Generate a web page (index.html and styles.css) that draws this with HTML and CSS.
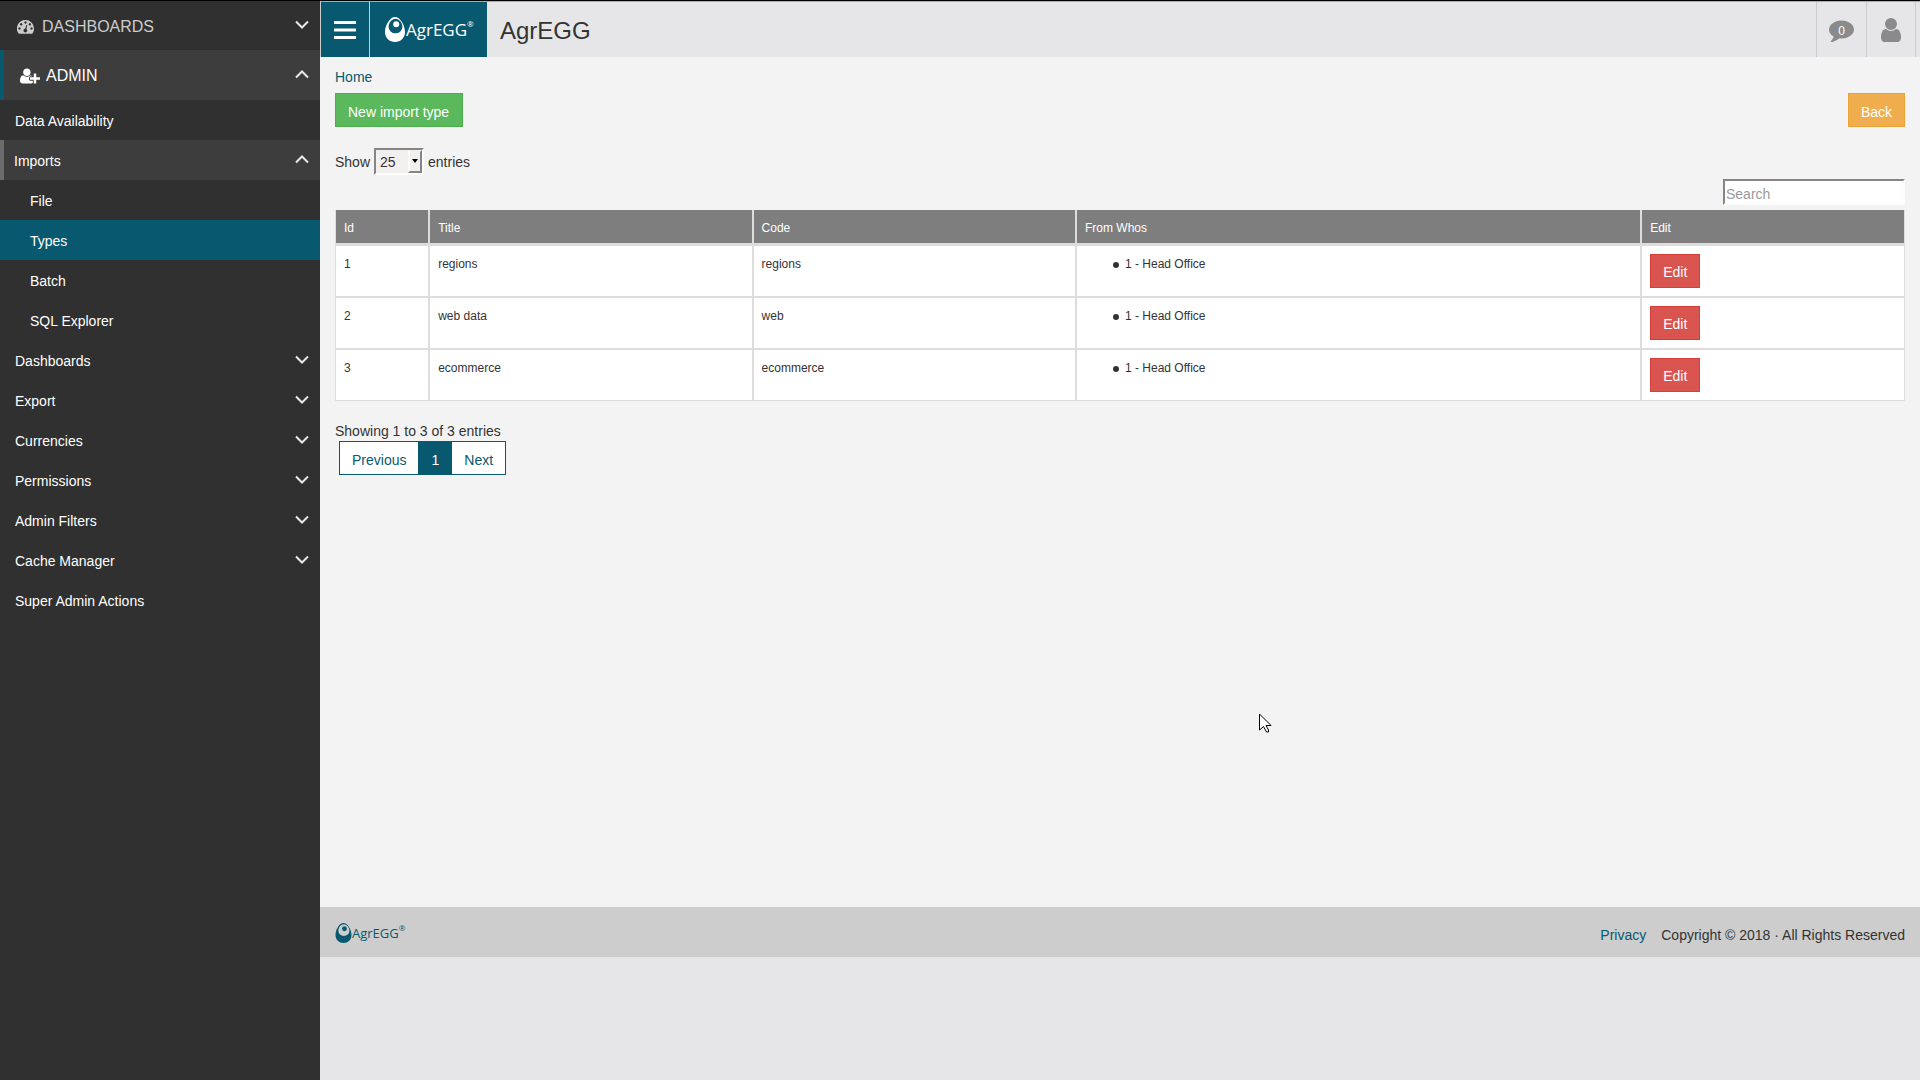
FILE: index.html
```html
<!DOCTYPE html>
<html lang="en">
<head>
<meta charset="utf-8">
<title>AgrEGG</title>
<link rel="stylesheet" href="styles.css">
</head>
<body>
<svg class="defs" aria-hidden="true">
  <symbol id="down" viewBox="0 0 14 9"><path d="M1 1.500 7 7.500 13 1.500" fill="none" stroke="currentColor" stroke-width="2"/></symbol>
  <symbol id="up" viewBox="0 0 14 9"><path d="M1 7.500 7 1.500 13 7.500" fill="none" stroke="currentColor" stroke-width="2"/></symbol>
  <symbol id="egg" viewBox="0 0 20 25"><path fill="currentColor" fill-rule="evenodd" d="M10 0C15 0 20 8 20 15 20 21 15.500 25 10 25S0 21 0 15C0 8 5 0 10 0ZM10.500 1.700C7 1.700 3.600 5.500 3.600 10A6.900 6.300 0 0 0 17.400 10C17.400 5.500 14 1.700 10.500 1.700Z"/><circle cx="11.200" cy="7.200" r="3" fill="currentColor"/></symbol>
</svg>
<nav class="sidebar">
  <a class="section" href="#"><svg class="gauge" viewBox="0 0 17 14"><path fill="currentColor" fill-rule="evenodd" d="M8.500 0A8.500 8.500 0 0 1 17 8.500C17 10.400 16.500 12 15.600 13.300Q15.300 13.700 14.800 13.700H2.200Q1.700 13.700 1.400 13.300A8.500 8.500 0 0 1 8.500 0ZM8.500 1.300a1.200 1.200 0 1 0 .01 0ZM4.200 3.100a1.200 1.200 0 1 0 .01 0ZM12.800 3.100a1.200 1.200 0 1 0 .01 0ZM2.500 7.300a1.200 1.200 0 1 0 .01 0ZM14.500 7.300a1.200 1.200 0 1 0 .01 0ZM9.300 5 8.300 8.600A1.900 1.900 0 1 0 9.400 8.900L10.300 5.300Z"/></svg><span>DASHBOARDS</span><svg class="chevron"><use href="#down"/></svg></a>
  <a class="section open" href="#"><svg class="admin" viewBox="0 0 2048 1792"><path fill="currentColor" d="M704 896q-159 0-271.500-112.500t-112.500-271.500 112.500-271.500 271.500-112.500 271.500 112.500 112.500 271.500-112.500 271.500-271.500 112.500zm960 128h352q13 0 22.500 9.500t9.500 22.500v192q0 13-9.500 22.500t-22.500 9.500h-352v352q0 13-9.500 22.500t-22.500 9.500h-192q-13 0-22.500-9.500t-9.500-22.500v-352h-352q-13 0-22.500-9.500t-9.500-22.500v-192q0-13 9.500-22.500t22.500-9.500h352v-352q0-13 9.500-22.500t22.500-9.500h192q13 0 22.500 9.500t9.500 22.500v352zm-736 224q0 52 38 90t90 38h256v238q-68 50-171 50h-874q-121 0-194-69t-73-190q0-53 3.500-103.500t14-109 26.500-108.500 43-97.500 62-81 85.500-53.500 111.500-20q19 0 39 17 79 61 154.500 91.500t164.500 30.500 164.500-30.500 154.500-91.500q20-17 39-17 132 0 217 96h-223q-52 0-90 38t-38 90v192z"/></svg><span>ADMIN</span><svg class="chevron"><use href="#up"/></svg></a>
  <a class="item" href="#">Data Availability</a>
  <a class="item open" href="#">Imports<svg class="chevron"><use href="#up"/></svg></a>
  <a class="item sub" href="#">File</a>
  <a class="item sub active" href="#">Types</a>
  <a class="item sub" href="#">Batch</a>
  <a class="item sub" href="#">SQL Explorer</a>
  <a class="item" href="#">Dashboards<svg class="chevron"><use href="#down"/></svg></a>
  <a class="item" href="#">Export<svg class="chevron"><use href="#down"/></svg></a>
  <a class="item" href="#">Currencies<svg class="chevron"><use href="#down"/></svg></a>
  <a class="item" href="#">Permissions<svg class="chevron"><use href="#down"/></svg></a>
  <a class="item" href="#">Admin Filters<svg class="chevron"><use href="#down"/></svg></a>
  <a class="item" href="#">Cache Manager<svg class="chevron"><use href="#down"/></svg></a>
  <a class="item" href="#">Super Admin Actions</a>
</nav>
<div class="page">
  <header class="topbar">
    <button class="toggle" type="button" aria-label="Toggle menu"><svg viewBox="0 0 22 18"><path fill="currentColor" d="M0 0h22v3H0zM0 7.500h22v3H0zM0 15h22v3H0z"/></svg></button>
    <a class="logo" href="#"><svg class="egg"><use href="#egg"/></svg><span>AgrEGG</span><sup>®</sup></a>
    <h1>AgrEGG</h1>
    <a class="action" href="#" aria-label="Messages"><svg class="comment" viewBox="0 0 1792 1792"><path fill="currentColor" d="M1792 896q0 174-120 321.500t-326 233-450 85.500q-70 0-145-8-198 175-460 242-49 14-114 22-17 2-30.500-9t-17.500-29v-1q-3-4-.5-12t2-10 4.500-9.500l6-9 7-8.500 8-9q7-8 31-34.500t34.500-38 31-39.500 32.500-51 27-59 26-76q-157-89-247.500-220t-90.500-281q0-174 120-321.500t326-233 450-85.500 450 85.500 326 233 120 321.500z"/></svg><span class="count">0</span></a>
    <a class="action last" href="#" aria-label="Account"><svg class="user" viewBox="0 0 1792 1792"><path fill="currentColor" d="M1536 1399q0 109-62.500 187t-150.500 78h-854q-88 0-150.500-78t-62.500-187q0-85 8.500-160.500t31.500-152 58.500-131 94-89 134.500-34.500q131 128 313 128t313-128q76 0 134.500 34.500t94 89 58.500 131 31.500 152 8.500 160.500zm-256-887q0 159-112.500 271.500t-271.500 112.500-271.500-112.500-112.500-271.500 112.500-271.500 271.500-112.500 271.500 112.500 112.500 271.500z"/></svg></a>
  </header>
  <main class="content">
    <div class="crumbs"><a href="#">Home</a></div>
    <div class="toolbar">
      <button class="btn success" type="button">New import type</button>
      <button class="btn warning" type="button">Back</button>
    </div>
    <div class="length">
      <label for="length">Show</label>
      <span class="picker"><select id="length"><option>10</option><option selected>25</option><option>50</option></select><span class="arrow"><svg viewBox="0 0 6 4"><path d="M0 0h6L3 4z"/></svg></span></span>
      <span class="unit">entries</span>
    </div>
    <div class="search"><input type="search" placeholder="Search" aria-label="Search"></div>
    <table>
      <colgroup><col class="col-id"><col class="col-name"><col class="col-name"><col class="col-whos"><col class="col-edit"></colgroup>
      <thead><tr><th>Id</th><th>Title</th><th>Code</th><th>From Whos</th><th>Edit</th></tr></thead>
      <tbody>
        <tr><td>1</td><td>regions</td><td>regions</td><td><ul><li>1 - Head Office</li></ul></td><td class="tools"><button class="btn danger" type="button">Edit</button></td></tr>
        <tr><td>2</td><td>web data</td><td>web</td><td><ul><li>1 - Head Office</li></ul></td><td class="tools"><button class="btn danger" type="button">Edit</button></td></tr>
        <tr><td>3</td><td>ecommerce</td><td>ecommerce</td><td><ul><li>1 - Head Office</li></ul></td><td class="tools"><button class="btn danger" type="button">Edit</button></td></tr>
      </tbody>
    </table>
    <div class="info">Showing 1 to 3 of 3 entries</div>
    <div class="pager"><a href="#">Previous</a><a class="current" href="#">1</a><a href="#">Next</a></div>
  </main>
  <footer class="footer">
    <a class="logo small" href="#"><svg class="egg"><use href="#egg"/></svg><span>AgrEGG</span><sup>®</sup></a>
    <a class="privacy" href="#">Privacy</a>
    <span>Copyright © 2018 · All Rights Reserved</span>
  </footer>
</div>
<svg class="cursor" viewBox="0 0 13 20" aria-hidden="true"><path d="M.5 1V17L4.500 13.500 7.500 19H9.500V17L7 12.500H12Z" fill="#fff" stroke="#000"/></svg>
</body>
</html>
```
FILE: styles.css
```css
* { box-sizing: border-box; }
body {
  margin: 0;
  min-height: 100vh;
  display: flex;
  border-top: 1px solid #000;
  background: #e6e6e8;
  color: #333;
  font: 14px/20px "Liberation Sans", Arial, sans-serif;
}
a { color: #08596f; text-decoration: none; }
.defs { position: absolute; width: 0; height: 0; }

.sidebar { flex: 0 0 320px; background: #303030; }
.section, .item {
  display: flex;
  align-items: center;
  padding: 2px 11px 0 15px;
  color: #fff;
}
.section { height: 50px; padding-left: 17px; gap: 8px; font-size: 16px; color: #ccc; }
.section:first-child { height: 49px; }
.item { height: 40px; }
.section.open, .item.open { background: #3d3d3d; color: #fff; }
.section.open { border-left: 4px solid #08596f; padding-left: 16px; gap: 6px; }
.item.open { border-left: 4px solid #6b6b6b; padding-left: 10px; }
.item.sub { padding-left: 30px; }
.item.active { background: #08596f; }
.chevron { width: 14px; height: 9px; margin: 0 0 4px auto; color: #e8e8e8; }
.gauge { width: 17px; height: 14px; }
.admin { width: 20px; height: 18px; }

.page { flex: 1; min-width: 0; }
.topbar {
  display: flex;
  height: 56px;
  border-top: 1px solid #aaa;
  border-left: 1px solid #ccc;
  padding-right: 4px;
}
.toggle {
  width: 49px;
  padding: 0;
  border: 0;
  border-right: 1px solid #ccc;
  background: #08596f;
  color: #fff;
}
.toggle svg { display: block; width: 22px; height: 18px; margin: auto; }
.logo { display: flex; align-items: center; font-family: "Open Sans", sans-serif; }
.topbar .logo { width: 117px; padding-left: 15px; background: #08596f; color: #fff; font-size: 17px; }
.logo .egg { width: 20px; height: 25px; margin-right: 1px; }
.logo sup { align-self: flex-start; font-size: 8px; line-height: 10px; }
.topbar .logo sup { margin-top: 17px; }
.topbar h1 { flex: 1; margin: 0; padding-left: 13px; font-size: 24px; font-weight: 400; line-height: 57px; }
.action {
  position: relative;
  display: flex;
  align-items: center;
  justify-content: center;
  width: 50px;
  border-left: 1px solid #ccc;
  color: #8a8a8a;
}
.action.last { border-right: 1px solid #ccc; }
.comment { width: 25px; height: 25px; }
.user { width: 28px; height: 28px; }
.count { position: absolute; inset: 0; text-align: center; line-height: 58px; color: #fff; font-size: 12px; }

.content { min-height: calc(100vh - 230px); padding: 10px 15px; background: #f3f3f3; }
.crumbs { height: 26px; }
.toolbar { display: flex; justify-content: space-between; }
.btn {
  display: block;
  height: 34px;
  padding: 3px 12px 0;
  border: 1px solid;
  color: #fff;
  font: inherit;
}
.success { padding: 3px 13px 0 12px; background: #5cb85c; border-color: #4cae4c; }
.warning { background: #f0ad4e; border-color: #eea236; }
.danger { background: #d9534f; border-color: #d43f3a; }
.length { display: flex; align-items: center; gap: 4px; margin-top: 20px; height: 28px; }
.length label, .unit { padding-top: 2px; }
.picker { position: relative; display: flex; }
select {
  appearance: none;
  width: 50px;
  height: 27px;
  padding: 1px 0 0 4px;
  border: 2px solid;
  border-color: #858585 #fcfcfc #fcfcfc #858585;
  border-radius: 0;
  background: #f2f0ef;
  color: #333;
  font: inherit;
}
.arrow {
  position: absolute;
  top: 2px;
  right: 2px;
  bottom: 2px;
  width: 14px;
  display: flex;
  align-items: center;
  justify-content: center;
  border: 2px solid;
  border-color: #f2f0ef #858585 #858585 #fcfcfc;
  pointer-events: none;
}
.arrow svg { width: 6px; height: 4px; }
.search { display: flex; justify-content: flex-end; margin: 4px 0 5px; }
.search input {
  width: 182px;
  height: 26px;
  padding: 3px 1px 0;
  border: 2px solid;
  border-color: #858585 #fcfcfc #fcfcfc #858585;
  background: #fff;
  font: inherit;
}
.search input::placeholder { color: #999; }

table { width: 100%; table-layout: fixed; border-collapse: separate; border-spacing: 0; font-size: 12px; line-height: 17px; }
.col-id { width: 6%; }
.col-name { width: 20.6%; }
.col-whos { width: 36%; }
th, td { padding: 10px 8px 6px; border: 1px solid #ddd; text-align: left; vertical-align: top; }
th { height: 35px; padding-bottom: 5px; border-top: 0; border-bottom-width: 2px; background: #7e7e7e; color: #fff; font-weight: 400; }
td { height: 52px; background: #fff; }
td.tools { padding: 8px; }
td ul { margin: 0; padding-left: 40px; }
td li { display: flex; align-items: center; }
td li::before { content: ""; width: 6px; height: 6px; margin: 0 6px 0 -12px; border-radius: 50%; background: #333; }
td .btn { font-size: 14px; }

.info { margin-top: 20px; }
.pager { display: flex; width: max-content; margin-left: 4px; border: 1px solid #08596f; background: #fff; }
.pager a { padding: 8px 12px 4px; }
.pager a.current { padding: 8px 13px 4px; background: #08596f; color: #fff; }

.footer { display: flex; align-items: center; height: 50px; padding: 6px 15px 0; background: #cdcdcd; }
.logo.small { align-self: flex-start; font-size: 13px; line-height: 20px; margin: 10px auto 0 0; }
.logo.small .egg { width: 17px; height: 20px; margin-right: 0; }
.privacy { margin-right: 15px; }
.cursor { position: absolute; left: 1259px; top: 713px; width: 13px; height: 20px; pointer-events: none; }
```
